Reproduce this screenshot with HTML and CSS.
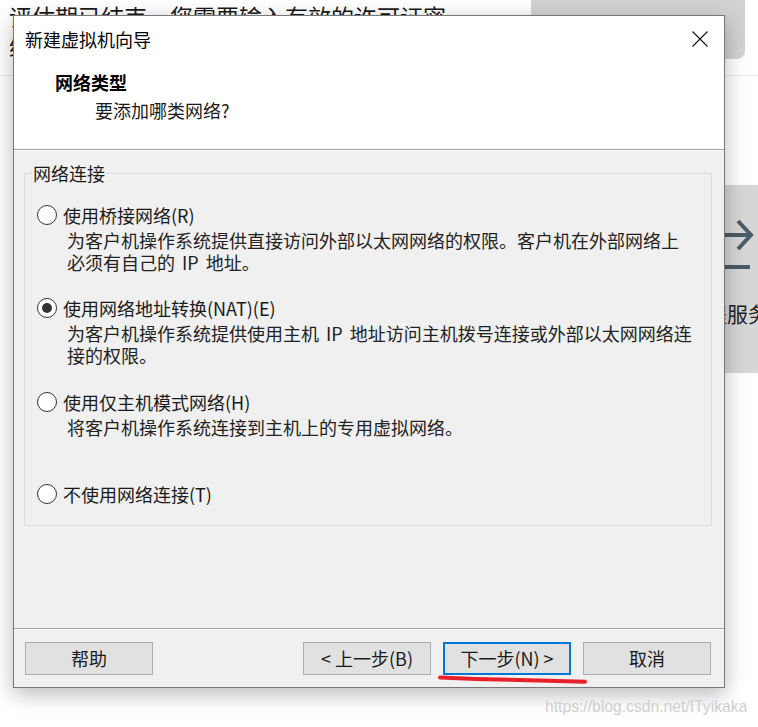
FILE: index.html
```html
<!DOCTYPE html>
<html lang="zh-CN">
<head>
<meta charset="utf-8">
<title>新建虚拟机向导</title>
<link rel="stylesheet" href="styles.css">
</head>
<body>
<div class="page">
  <div class="page-top">
    <div class="page-msg">评估期已结束，您需要输入有效的许可证密<br>继续</div>
    <div class="page-btn"></div>
  </div>
  <div class="page-rule"></div>
  <div class="page-card">
    <svg class="card-icon" width="55" height="60" viewBox="0 0 55 60">
      <path d="M0 20 H51 M38 6 L51 20 L38 34" fill="none" stroke="#4b5b67" stroke-width="4" stroke-linejoin="miter"/>
      <path d="M0 52 H50" stroke="#4b5b67" stroke-width="4"/>
    </svg>
    <div class="card-text">远程服务</div>
  </div>
</div>

<div class="dialog">
  <div class="dlg-header">
    <div class="titlebar">
      <span class="title">新建虚拟机向导</span>
      <svg class="close" width="16" height="16" viewBox="0 0 16 16">
        <path d="M0.5 0.5 L15.5 15.5 M15.5 0.5 L0.5 15.5" stroke="#111" stroke-width="1.1" fill="none"/>
      </svg>
    </div>
    <div class="h-title">网络类型</div>
    <div class="h-sub">要添加哪类网络?</div>
  </div>

  <div class="dlg-body">
    <fieldset class="group">
      <legend class="group-legend">网络连接</legend>
      <div class="opt">
        <div class="opt-label"><span class="radio"></span>使用桥接网络(R)</div>
        <div class="opt-desc">为客户机操作系统提供直接访问外部以太网网络的权限。客户机在外部网络上<br>必须有自己的 IP 地址。</div>
      </div>
      <div class="opt opt-2">
        <div class="opt-label"><span class="radio checked"></span>使用网络地址转换(NAT)(E)</div>
        <div class="opt-desc">为客户机操作系统提供使用主机 IP 地址访问主机拨号连接或外部以太网网络连<br>接的权限。</div>
      </div>
      <div class="opt opt-3">
        <div class="opt-label"><span class="radio"></span>使用仅主机模式网络(H)</div>
        <div class="opt-desc">将客户机操作系统连接到主机上的专用虚拟网络。</div>
      </div>
      <div class="opt opt-4">
        <div class="opt-label"><span class="radio"></span>不使用网络连接(T)</div>
      </div>
    </fieldset>
  </div>

  <div class="dlg-footer">
    <button class="btn">帮助</button>
    <div class="spacer"></div>
    <button class="btn">&lt; 上一步(B)</button>
    <button class="btn btn-primary">下一步(N) &gt;</button>
    <button class="btn">取消</button>
  </div>
</div>

<svg class="mark" width="758" height="727" viewBox="0 0 758 727">
  <path d="M440 677.5 L476 679 L548 680.8 L585 681.8" fill="none" stroke="#e8202a" stroke-width="4" stroke-linecap="round" stroke-linejoin="round"/>
</svg>
<div class="watermark">https://blog.csdn.net/ITyikaka</div>
</body>
</html>
```

FILE: styles.css
```css
* { box-sizing: border-box; }

html, body {
  margin: 0;
  padding: 0;
}

body {
  width: 758px;
  height: 727px;
  overflow: hidden;
  position: relative;
  background: #ffffff;
  font-family: "Noto Sans CJK SC", "Noto Sans", sans-serif;
  color: #1a1a1a;
}

/* ---------- background page ---------- */
.page {
  width: 758px;
}

.page-top {
  display: flex;
  justify-content: space-between;
  align-items: flex-start;
  height: 59px;
  padding: 0 13px 0 9px;
}

.page-msg {
  font-size: 23px;
  line-height: 30px;
  margin-top: 1px;
  white-space: nowrap;
  color: #1a1a1a;
}

.page-btn {
  width: 214px;
  height: 67px;
  margin-top: -8px;
  border-radius: 8px;
  background: #d2d2d2;
}

.page-rule {
  margin-top: 16px;
  height: 1px;
  background: #e6e6e6;
}

.page-card {
  margin-top: 109px;
  margin-left: 680px;
  width: 78px;
  height: 188px;
  background: #d6d6d6;
  padding-top: 30px;
  overflow: hidden;
}

.card-icon {
  display: block;
  margin-left: 20px;
}

.card-text {
  margin-top: 23px;
  margin-left: 5px;
  font-size: 21px;
  line-height: 30px;
  white-space: nowrap;
  color: #222;
}

/* ---------- dialog ---------- */
.dialog {
  position: absolute;
  left: 13px;
  top: 15px;
  width: 712px;
  height: 673px;
  border: 1px solid #777777;
  background: #f0f0f0;
  display: flex;
  flex-direction: column;
  box-shadow: 0 6px 20px rgba(0, 0, 0, 0.28);
  font-size: 18px;
}

.dlg-header {
  height: 134px;
  background: #ffffff;
  border-bottom: 1px solid #a0a0a0;
  flex: none;
}

.titlebar {
  height: 46px;
  display: flex;
  align-items: center;
  justify-content: space-between;
  padding: 0 16px 0 11px;
}

.title {
  font-size: 18px;
  color: #000;
}

.close {
  display: block;
}

.h-title {
  margin-top: 7px;
  padding-left: 41px;
  font-weight: 700;
  line-height: 26px;
  color: #000;
}

.h-sub {
  margin-top: 2px;
  padding-left: 81px;
  line-height: 26px;
}

.dlg-body {
  flex: 1;
  border-top: 1px solid #ffffff;
  padding: 11px 12px 0 10px;
}

.group {
  margin: 0;
  padding: 20px 0 20px 0;
  border: 1px solid #dcdcdc;
  min-width: 0;
}

.group-legend {
  margin-left: 7px;
  padding: 0 1px;
  line-height: 22px;
  font-size: 18px;
}

.opt {
  padding-left: 12px;
}

.opt-label {
  display: flex;
  align-items: center;
  gap: 6px;
  line-height: 22px;
  white-space: nowrap;
}

.radio {
  width: 20px;
  height: 20px;
  border: 1px solid #333333;
  border-radius: 50%;
  background: #ffffff;
  flex: none;
  display: flex;
  align-items: center;
  justify-content: center;
}

.radio.checked::after {
  content: "";
  width: 10px;
  height: 10px;
  border-radius: 50%;
  background: #333333;
}

.opt-desc {
  margin-top: 3px;
  padding-left: 30px;
  line-height: 22px;
  white-space: nowrap;
  word-spacing: 3px;
  color: #222;
}

.opt-2 { margin-top: 24px; }
.opt-3 { margin-top: 25px; }
.opt-4 { margin-top: 45px; }

.dlg-footer {
  flex: none;
  height: 59px;
  border-top: 1px solid #a0a0a0;
  box-shadow: inset 0 1px 0 #ffffff;
  display: flex;
  align-items: flex-start;
  gap: 12px;
  padding: 13px 13px 0 11px;
}

.spacer { flex: 1; }

.btn {
  width: 128px;
  height: 33px;
  margin: 0;
  padding: 0;
  border: 1px solid #adadad;
  background: #e1e1e1;
  font-family: "Noto Sans CJK SC", "Noto Sans", sans-serif;
  font-size: 18px;
  line-height: 31px;
  color: #1a1a1a;
}

.btn-primary {
  border: 2px solid #0078d7;
  line-height: 29px;
}

/* ---------- annotations ---------- */
.mark {
  position: absolute;
  left: 0;
  top: 0;
  pointer-events: none;
}

.watermark {
  position: absolute;
  left: 545px;
  top: 697px;
  font-family: "Liberation Sans", Arial, sans-serif;
  font-size: 15.7px;
  line-height: 20px;
  color: #cfcfcf;
  white-space: nowrap;
}
```
